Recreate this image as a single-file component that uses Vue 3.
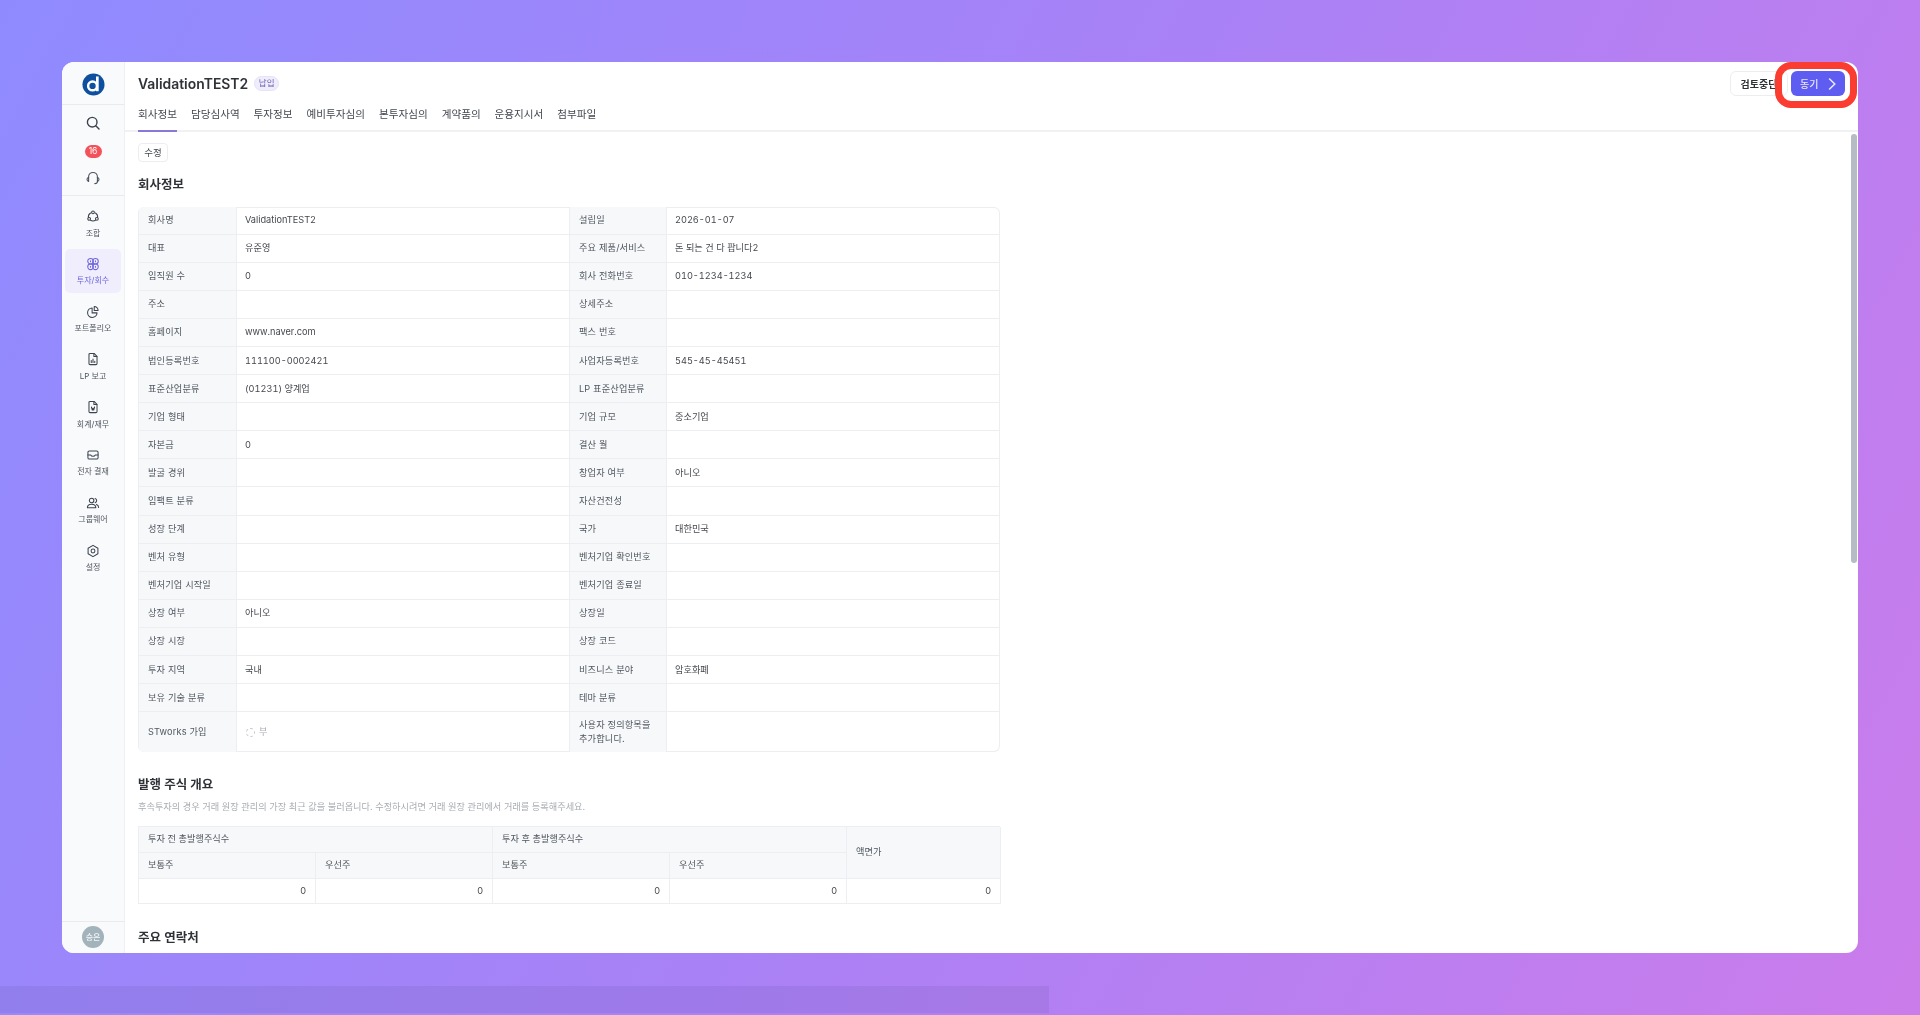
<template>
  <div class="page">
    <div class="app-window">
      <aside class="sidebar">
        <div class="logo-wrap">
          <svg class="logo" viewBox="0 0 24 24">
            <circle cx="12" cy="12" r="11.5" fill="#0f4f9f" />
            <circle cx="11" cy="13.5" r="4.6" fill="none" stroke="#fff" stroke-width="2.6" />
            <rect x="14.6" y="3.6" width="2.8" height="15.4" fill="#fff" />
          </svg>
        </div>
        <div class="tools">
          <svg class="tool-icon" viewBox="0 0 16 16" fill="none" stroke="#3d4450" stroke-width="1.4" stroke-linecap="round">
            <circle cx="7.2" cy="7.2" r="4.8" />
            <path d="M10.8 10.8 14 14" />
          </svg>
          <span class="badge">16</span>
          <svg class="tool-icon" viewBox="0 0 16 16" fill="none" stroke="#4a515c" stroke-width="1.05" stroke-linecap="round">
            <path d="M3.6 7.6V6.8a4.4 4.4 0 0 1 8.8 0v.8" />
            <path d="M3.6 7.6c-1 .2-1.6 1-1.6 1.9s.6 1.7 1.6 1.9V7.6Z" />
            <path d="M12.4 7.6c1 .2 1.6 1 1.6 1.9s-.6 1.7-1.6 1.9V7.6Z" />
            <path d="M12.4 11.4c0 1.3-1 2.2-2.6 2.2" />
          </svg>
        </div>
        <nav class="menu">
          <div v-for="item in menu" :key="item.label" class="menu-item" :class="{ active: item.active }">
            <svg class="menu-icon" viewBox="0 0 16 16" fill="none" :stroke="item.active ? '#6f66dc' : '#3d4450'" stroke-width="1.2" stroke-linecap="round" stroke-linejoin="round">
              <path v-for="d in item.paths" :key="d" :d="d" />
            </svg>
            <span>{{ item.label }}</span>
          </div>
        </nav>
        <div class="user">
          <span class="avatar">승은</span>
        </div>
      </aside>

      <main class="main">
        <header class="header">
          <div class="title-row">
            <h1>ValidationTEST2</h1>
            <span class="tag">납입</span>
            <div class="actions">
              <button class="btn-stop">검토중단</button>
              <button class="btn-next">
                동기
                <svg viewBox="0 0 10 12" fill="none" stroke="#e9e8ff" stroke-width="1.6" stroke-linecap="round" stroke-linejoin="round">
                  <path d="M2.6 1 7.8 6 2.6 11" />
                </svg>
              </button>
            </div>
          </div>
          <div class="tabs">
            <a v-for="(tab, i) in tabs" :key="tab" class="tab" :class="{ current: i === 0 }">{{ tab }}</a>
          </div>
        </header>

        <div class="content">
          <button class="btn-edit">수정</button>
          <h2 class="first-title">회사정보</h2>
          <div class="info-table">
            <template v-for="row in companyRows" :key="row[0]">
              <div class="cell label">{{ row[0] }}</div>
              <div class="cell value">
                <span v-if="row[1] === 'radio'" class="radio"><i></i>부</span>
                <template v-else>{{ row[1] }}</template>
              </div>
              <div class="cell label">{{ row[2] }}</div>
              <div class="cell value">{{ row[3] }}</div>
            </template>
          </div>

          <h2 class="stock-title">발행 주식 개요</h2>
          <p class="desc">후속투자의 경우 거래 원장 관리의 가장 최근 값을 불러옵니다. 수정하시려면 거래 원장 관리에서 거래를 등록해주세요.</p>
          <div class="stock-table">
            <div class="s-cell head span-2">투자 전 총발행주식수</div>
            <div class="s-cell head span-2">투자 후 총발행주식수</div>
            <div class="s-cell head par">액면가</div>
            <div v-for="(name, i) in shareHeads" :key="i" class="s-cell head">{{ name }}</div>
            <div v-for="i in 5" :key="'v' + i" class="s-cell num">0</div>
          </div>

          <h2 class="contact-title">주요 연락처</h2>
        </div>
        <div class="scroll-thumb"></div>
      </main>
    </div>

    <div class="highlight"></div>
    <div class="bottom-band"></div>
  </div>
</template>

<script setup>
const menu = [
  { label: '조합', paths: ['M8 2.2a1.6 1.6 0 1 1 0 3.2 1.6 1.6 0 0 1 0-3.2Z', 'M3.6 9.6a1.6 1.6 0 1 1 0 3.2 1.6 1.6 0 0 1 0-3.2Z', 'M12.4 9.6a1.6 1.6 0 1 1 0 3.2 1.6 1.6 0 0 1 0-3.2Z', 'M5.2 4.6A5.4 5.4 0 0 0 2.7 9.7', 'M10.8 4.6a5.4 5.4 0 0 1 2.5 5.1', 'M5.2 12.9a5.4 5.4 0 0 0 5.6 0'] },
  { label: '투자/회수', active: true, paths: ['M5.2 1.6a3.2 3.2 0 1 1 0 6.4 3.2 3.2 0 0 1 0-6.4Z', 'M10.8 1.6a3.2 3.2 0 1 1 0 6.4 3.2 3.2 0 0 1 0-6.4Z', 'M5.2 8a3.2 3.2 0 1 1 0 6.4 3.2 3.2 0 0 1 0-6.4Z', 'M10.8 8a3.2 3.2 0 1 1 0 6.4 3.2 3.2 0 0 1 0-6.4Z', 'M5.2 4.2v1.2M10.8 4.2v1.2M5.2 10.6v1.2M10.8 10.6v1.2'] },
  { label: '포트폴리오', paths: ['M7 3.4a5.4 5.4 0 1 0 5.6 5.6H7V3.4Z', 'M9.4 1.8a4.4 4.4 0 0 1 4.4 4.4H9.4V1.8Z'] },
  { label: 'LP 보고', paths: ['M3.4 2.8A1.2 1.2 0 0 1 4.6 1.6h4.6l3.4 3.4v8.2a1.2 1.2 0 0 1-1.2 1.2H4.6a1.2 1.2 0 0 1-1.2-1.2V2.8Z', 'M9 1.8v3.4h3.4', 'M6 12V9.6M8 12V8M10 12v-1.4'] },
  { label: '회계/재무', paths: ['M3.4 2.8A1.2 1.2 0 0 1 4.6 1.6h4.6l3.4 3.4v8.2a1.2 1.2 0 0 1-1.2 1.2H4.6a1.2 1.2 0 0 1-1.2-1.2V2.8Z', 'M9 1.8v3.4h3.4', 'M6.2 8l1 3.6L8 9.4l.8 2.2 1-3.6'] },
  { label: '전자 결재', paths: ['M2.2 5a1.6 1.6 0 0 1 1.6-1.6h8.4A1.6 1.6 0 0 1 13.8 5v6a1.6 1.6 0 0 1-1.6 1.6H3.8A1.6 1.6 0 0 1 2.2 11V5Z', 'M2.2 8h3.2c.4 1 1.4 1.4 2.6 1.4s2.2-.4 2.6-1.4h3.2'] },
  { label: '그룹웨어', paths: ['M6.4 2.6a2.6 2.6 0 1 1 0 5.2 2.6 2.6 0 0 1 0-5.2Z', 'M1.6 13.4c0-2.6 2.1-4 4.8-4s4.8 1.4 4.8 4H1.6Z', 'M10.4 2.8a2.5 2.5 0 0 1 0 4.8', 'M12 9.6c1.5.5 2.4 1.8 2.4 3.6'] },
  { label: '설정', paths: ['M8 1.6 13.6 4.8v6.4L8 14.4 2.4 11.2V4.8L8 1.6Z', 'M8 5.8a2.2 2.2 0 1 1 0 4.4 2.2 2.2 0 0 1 0-4.4Z'] }
]

const tabs = ['회사정보', '담당심사역', '투자정보', '예비투자심의', '본투자심의', '계약품의', '운용지시서', '첨부파일']

const companyRows = [
  ['회사명', 'ValidationTEST2', '설립일', '2026-01-07'],
  ['대표', '유준영', '주요 제품/서비스', '돈 되는 건 다 팝니다2'],
  ['임직원 수', '0', '회사 전화번호', '010-1234-1234'],
  ['주소', '', '상세주소', ''],
  ['홈페이지', 'www.naver.com', '팩스 번호', ''],
  ['법인등록번호', '111100-0002421', '사업자등록번호', '545-45-45451'],
  ['표준산업분류', '(01231) 양계업', 'LP 표준산업분류', ''],
  ['기업 형태', '', '기업 규모', '중소기업'],
  ['자본금', '0', '결산 월', ''],
  ['발굴 경위', '', '창업자 여부', '아니오'],
  ['임팩트 분류', '', '자산건전성', ''],
  ['성장 단계', '', '국가', '대한민국'],
  ['벤처 유형', '', '벤처기업 확인번호', ''],
  ['벤처기업 시작일', '', '벤처기업 종료일', ''],
  ['상장 여부', '아니오', '상장일', ''],
  ['상장 시장', '', '상장 코드', ''],
  ['투자 지역', '국내', '비즈니스 분야', '암호화폐'],
  ['보유 기술 분류', '', '테마 분류', ''],
  ['STworks 가입', 'radio', '사용자 정의항목을 추가합니다.', '']
]

const shareHeads = ['보통주', '우선주', '보통주', '우선주']
</script>

<style>
html, body {
  margin: 0;
  height: 100%;
  overflow: hidden;
}
</style>

<style scoped>
* {
  box-sizing: border-box;
}

.page {
  position: relative;
  width: 1920px;
  height: 1015px;
  padding: 62px;
  overflow: hidden;
  background: linear-gradient(118deg, #8f8bff 0%, #a981f6 50%, #cb7ceb 100%);
  font-family: Inter, "Noto Sans CJK KR", sans-serif;
  filter: blur(0.35px);
}

.app-window {
  display: flex;
  height: 891px;
  border-radius: 12px;
  overflow: hidden;
  background: #fff;
}

.sidebar {
  display: flex;
  flex-direction: column;
  width: 63px;
  flex-shrink: 0;
  background: #f9fafc;
  border-right: 1px solid #eef0f3;
}

.logo-wrap {
  display: flex;
  justify-content: center;
  align-items: center;
  height: 43px;
  padding-top: 2px;
  border-bottom: 1px solid #e8eaee;
}

.logo {
  width: 23px;
  height: 23px;
}

.tools {
  display: flex;
  flex-direction: column;
  align-items: center;
  height: 91px;
  padding-top: 10px;
  border-bottom: 1px solid #e8eaee;
}

.tool-icon {
  width: 16px;
  height: 16px;
  flex-shrink: 0;
}

.badge {
  margin: 13.5px 0 12.5px;
  width: 17px;
  height: 13px;
  border-radius: 7px;
  background: #f4525a;
  color: #fff;
  font-size: 8.5px;
  line-height: 13px;
  text-align: center;
}

.menu {
  display: flex;
  flex-direction: column;
  gap: 3.8px;
  flex: 1;
  padding: 5px 3px 0;
}

.menu-item {
  display: flex;
  flex-direction: column;
  align-items: center;
  gap: 4.5px;
  height: 44px;
  padding-top: 8px;
  border-radius: 5px;
  color: #50565f;
  font-size: 8px;
  line-height: 11px;
}

.menu-item.active {
  background: #f0eefc;
  color: #6f66dc;
}

.menu-icon {
  width: 14px;
  height: 14px;
}

.user {
  display: flex;
  justify-content: center;
  align-items: center;
  height: 32px;
  padding-bottom: 2px;
  border-top: 1px solid #e8eaee;
}

.avatar {
  width: 22px;
  height: 22px;
  border-radius: 50%;
  background: #a3b3bb;
  color: #f2f5f6;
  font-size: 8px;
  font-weight: 500;
  line-height: 22px;
  text-align: center;
}

.main {
  position: relative;
  flex: 1;
  min-width: 0;
}

.header {
  height: 70px;
  padding: 0 13px;
  border-bottom: 2px solid #f1f1f3;
}

.title-row {
  display: flex;
  align-items: center;
  height: 43px;
}

h1 {
  margin: 0;
  color: #2f3237;
  font-size: 13.9px;
  font-weight: 600;
}

.tag {
  margin-left: 6px;
  width: 25px;
  height: 15px;
  border-radius: 8px;
  border: 1px solid #e6e2f8;
  background: #efecfc;
  color: #6b63b5;
  font-size: 8.5px;
  line-height: 13px;
  text-align: center;
}

.actions {
  display: flex;
  gap: 3px;
  margin-left: auto;
}

button {
  font-family: inherit;
  padding: 0;
  cursor: pointer;
}

.btn-stop {
  width: 58px;
  height: 25px;
  border: 1px solid #ebedf0;
  border-radius: 6px;
  background: #fff;
  color: #2f3237;
  font-size: 10px;
  font-weight: 600;
}

.btn-next {
  display: flex;
  align-items: center;
  justify-content: space-between;
  width: 54px;
  height: 25px;
  padding: 0 8px 0 9px;
  border: 0;
  border-radius: 6px;
  background: #5f5cf2;
  color: #e9e8ff;
  font-size: 10px;
  font-weight: 500;
}

.btn-next svg {
  width: 10px;
  height: 12px;
}

.tabs {
  display: flex;
  gap: 13.95px;
  height: 27px;
}

.tab {
  height: 27px;
  color: #44484f;
  font-size: 10.6px;
  line-height: 20px;
}

.tab.current {
  border-bottom: 2px solid #8878d8;
}

.content {
  padding: 10.5px 0 0 13px;
  color: #454a52;
}

.btn-edit {
  display: block;
  width: 30px;
  height: 19px;
  border: 1px solid #ebedf0;
  border-radius: 4px;
  background: #fff;
  color: #44484f;
  font-size: 9.5px;
}

h2 {
  margin: 0;
  color: #2f3237;
  font-size: 12.5px;
  font-weight: 600;
  line-height: 18px;
}

.first-title {
  margin-top: 14.5px;
}

.info-table {
  display: grid;
  grid-template-columns: 99px 332px 98px 333px;
  grid-template-rows: repeat(18, 28.1px) 40px;
  width: 862px;
  margin-top: 12.5px;
  border-radius: 6px;
  overflow: hidden;
  box-shadow: inset 0 0 0 1px #eceef1;
  font-size: 9.2px;
}

.cell {
  display: flex;
  align-items: center;
  padding: 0 9px;
  border-bottom: 1px solid #eceef1;
  line-height: 14px;
}

.cell:nth-last-child(-n + 4) {
  border-bottom: 0;
}

.label {
  padding-left: 9px;
  background: #f7f8fa;
  border-left: 1px solid #eceef1;
  border-right: 1px solid #eceef1;
  color: #50565f;
  letter-spacing: 0.15px;
}

.value {
  padding-left: 8px;
  color: #44474d;
  font-variant-numeric: tabular-nums;
}

.radio {
  display: flex;
  align-items: center;
  gap: 4px;
  color: #a9adb3;
}

.radio i {
  width: 9px;
  height: 9px;
  margin-left: 1px;
  border: 1px dashed #c4c8cd;
  border-radius: 50%;
}

.stock-title {
  margin-top: 23.5px;
}

.desc {
  margin: 6px 0 0;
  color: #a8acb2;
  font-size: 9.2px;
  line-height: 14px;
}

.stock-table {
  display: grid;
  grid-template-columns: 177px 177px 177px 177px 154px;
  grid-template-rows: 26px 26px 25px;
  width: 862px;
  margin-top: 12px;
  border-top: 1px solid #eceef1;
  border-left: 1px solid #eceef1;
  font-size: 9.2px;
}

.s-cell {
  display: flex;
  align-items: center;
  padding: 0 9px;
  border-right: 1px solid #eceef1;
  border-bottom: 1px solid #eceef1;
}

.head {
  padding-bottom: 2px;
  background: #f7f8fa;
  color: #50565f;
}

.span-2 {
  grid-column: span 2;
}

.par {
  grid-row: span 2;
}

.num {
  justify-content: flex-end;
  color: #44474d;
}

.contact-title {
  margin-top: 25px;
}

.scroll-thumb {
  position: absolute;
  top: 72px;
  right: 1px;
  width: 6px;
  height: 429px;
  border-radius: 3px;
  background: #b6bcc4;
}

.highlight {
  position: absolute;
  left: 1775px;
  top: 62px;
  width: 82px;
  height: 46px;
  border: 7px solid #fb3c30;
  border-radius: 16px;
}

.bottom-band {
  position: absolute;
  left: 0;
  bottom: 2px;
  width: 1049px;
  height: 27px;
  background: rgba(70, 60, 120, 0.1);
}
</style>
